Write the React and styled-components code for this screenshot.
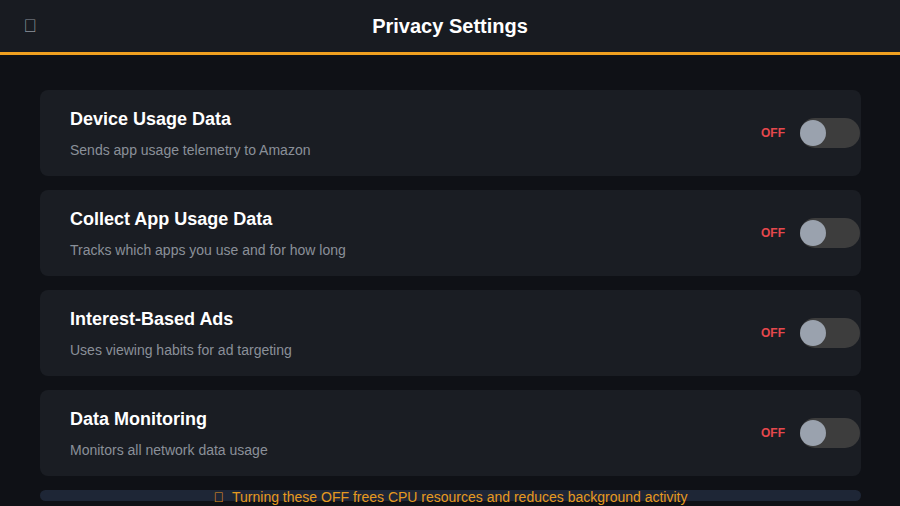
import React, { useState } from 'react';
import styled, { createGlobalStyle } from 'styled-components';

const GlobalStyle = createGlobalStyle`
  html, body {
    margin: 0;
    padding: 0;
    background: #0f1116;
    font-family: "Liberation Sans", Arial, sans-serif;
    overflow: hidden;
  }
`;

const Page = styled.div`
  width: 900px;
  height: 506px;
  display: flex;
  flex-direction: column;
  background: #0f1116;
  overflow: hidden;
`;

const Header = styled.header`
  height: 52px;
  flex-shrink: 0;
  display: grid;
  grid-template-columns: 60px 1fr 60px;
  align-items: center;
  background: #181b21;
  border-bottom: 3px solid #f0a020;
`;

const BackButton = styled.span`
  justify-self: center;
  color: #8d939c;
  font-size: 18px;
  margin-top: 1px;
`;

const Title = styled.h1`
  margin: 0;
  text-align: center;
  color: #ffffff;
  font-size: 20px;
  font-weight: 700;
`;

const Content = styled.main`
  flex: 1;
  display: flex;
  flex-direction: column;
  gap: 14px;
  padding: 35px 39px 0 40px;
  min-height: 0;
`;

const Card = styled.div`
  height: 86px;
  flex-shrink: 0;
  box-sizing: border-box;
  display: flex;
  align-items: center;
  justify-content: space-between;
  padding: 0 1px 0 30px;
  background: #1a1d23;
  border-radius: 8px;
`;

const TextBlock = styled.div`
  display: flex;
  flex-direction: column;
  gap: 12px;
`;

const SettingName = styled.div`
  color: #ffffff;
  font-size: 18px;
  font-weight: 700;
  line-height: 22px;
`;

const SettingDesc = styled.div`
  color: #8a9099;
  font-size: 14px;
  line-height: 17px;
`;

const ToggleArea = styled.div`
  display: flex;
  align-items: center;
  gap: 15px;
`;

const StateLabel = styled.span`
  color: ${p => (p.on ? '#4caf50' : '#e5484d')};
  font-size: 12px;
  font-weight: 700;
`;

const Track = styled.button`
  position: relative;
  width: 60px;
  height: 30px;
  padding: 0;
  border: none;
  border-radius: 15px;
  background: ${p => (p.on ? '#f0a020' : '#3d3d3d')};
  cursor: pointer;
`;

const Knob = styled.span`
  position: absolute;
  top: 2px;
  left: ${p => (p.on ? '34px' : '0px')};
  width: 26px;
  height: 26px;
  border-radius: 50%;
  background: #9aa2ae;
`;

const Notice = styled.div`
  flex-shrink: 0;
  display: flex;
  align-items: center;
  justify-content: center;
  background: #1e2636;
  border-radius: 6px;
  color: #e69a1f;
  font-size: 14px;
  line-height: 14px;
  padding-top: 3px;
  height: 8px;
  white-space: nowrap;
  overflow: visible;
`;

const NoticeIcon = styled.span`
  margin-right: 8px;
`;

const settings = [
  { id: 'device', name: 'Device Usage Data', desc: 'Sends app usage telemetry to Amazon' },
  { id: 'apps', name: 'Collect App Usage Data', desc: 'Tracks which apps you use and for how long' },
  { id: 'ads', name: 'Interest-Based Ads', desc: 'Uses viewing habits for ad targeting' },
  { id: 'monitor', name: 'Data Monitoring', desc: 'Monitors all network data usage' },
];

function App() {
  const [values, setValues] = useState({ device: false, apps: false, ads: false, monitor: false });
  const flip = id => setValues({ ...values, [id]: !values[id] });

  return (
    <Page>
      <GlobalStyle />
      <Header>
        <BackButton>{'\uE000'}</BackButton>
        <Title>Privacy Settings</Title>
        <span />
      </Header>
      <Content>
        {settings.map(s => (
          <Card key={s.id}>
            <TextBlock>
              <SettingName>{s.name}</SettingName>
              <SettingDesc>{s.desc}</SettingDesc>
            </TextBlock>
            <ToggleArea>
              <StateLabel on={values[s.id]}>{values[s.id] ? 'ON' : 'OFF'}</StateLabel>
              <Track on={values[s.id]} onClick={() => flip(s.id)}>
                <Knob on={values[s.id]} />
              </Track>
            </ToggleArea>
          </Card>
        ))}
        <Notice>
          <NoticeIcon>{'\uE001'}</NoticeIcon>
          Turning these OFF frees CPU resources and reduces background activity
        </Notice>
      </Content>
    </Page>
  );
}

export default App;
